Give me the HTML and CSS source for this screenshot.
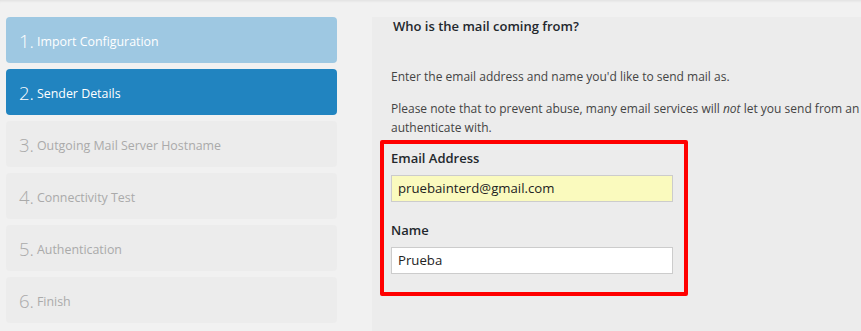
FILE: index.html
```html
<!DOCTYPE html>
<html>
<head>
<meta charset="utf-8">
<link rel="stylesheet" href="styles.css">
</head>
<body>
<div class="page">
  <nav class="steps">
    <div class="step done"><span class="num">1.</span><span class="lbl">Import Configuration</span></div>
    <div class="step current"><span class="num">2.</span><span class="lbl">Sender Details</span></div>
    <div class="step"><span class="num">3.</span><span class="lbl">Outgoing Mail Server Hostname</span></div>
    <div class="step"><span class="num">4.</span><span class="lbl">Connectivity Test</span></div>
    <div class="step"><span class="num">5.</span><span class="lbl">Authentication</span></div>
    <div class="step"><span class="num">6.</span><span class="lbl">Finish</span></div>
  </nav>
  <section class="panel">
    <h2 class="title">Who is the mail coming from?</h2>
    <p class="intro">Enter the email address and name you'd like to send mail as.</p>
    <p class="note">Please note that to prevent abuse, many email services will <em>not</em> let you send from an email address other than the one you<br>authenticate with.</p>
    <div class="highlight">
      <label class="field-label">Email Address</label>
      <div class="input autofill">pruebainterd@gmail.com</div>
      <label class="field-label name-label">Name</label>
      <div class="input">Prueba</div>
    </div>
  </section>
</div>
</body>
</html>
```
FILE: styles.css
```css
html, body {
  margin: 0;
  padding: 0;
  height: 100%;
  overflow: hidden;
}
body {
  background: #f1f1f1;
  font-family: "Open Sans", "Noto Sans", sans-serif;
  color: #444;
  box-shadow: inset 0 3px 3px -2px rgba(0,0,0,0.08);
}
.page {
  display: flex;
  padding-top: 17px;
  height: 100%;
  box-sizing: border-box;
}
.steps {
  display: flex;
  flex-direction: column;
  gap: 6px;
  margin-left: 6px;
  width: 331px;
  flex: 0 0 331px;
}
.step {
  height: 46px;
  border-radius: 4px;
  background: #ececec;
  color: #aaa;
  display: flex;
  align-items: center;
  padding: 2px 0 0 13px;
  box-sizing: border-box;
  white-space: nowrap;
}
.step .num {
  font-size: 18.5px;
  font-weight: 300;
  margin-right: 3px;
  line-height: 1;
}
.step .lbl {
  font-size: 12.4px;
  line-height: 1;
  padding-top: 3px;
}
.step.done {
  background: #9ec8e2;
  color: #fff;
}
.step.current {
  background: #2184c0;
  color: #fff;
}
.panel {
  flex: 1;
  margin-left: 35px;
  background: #ececec;
  padding: 0 0 0 19px;
  font-size: 12px;
  line-height: 19px;
  min-width: 0;
  overflow: hidden;
}
.title {
  margin: 0;
  font-size: 13px;
  font-weight: 600;
  color: #23282d;
  line-height: 18px;
  padding-left: 2px;
}
.intro {
  margin: 32px 0 13px;
}
.note {
  margin: 0;
  white-space: nowrap;
}
.highlight {
  margin: 3px 0 0 -11px;
  width: 308px;
  box-sizing: border-box;
  border: 4px solid #ff0000;
  border-radius: 2px;
  padding: 5px 11px 18px 7px;
  font-size: 13px;
}
.field-label {
  display: block;
  font-weight: 600;
  color: #23282d;
  line-height: 18px;
  margin-bottom: 8px;
}
.name-label {
  margin-top: 19px;
}
.input {
  height: 27px;
  box-sizing: border-box;
  border: 1px solid #ccc;
  background: #fff;
  color: #222;
  font-size: 13.2px;
  line-height: 25px;
  padding-left: 6px;
  width: 282px;
}
.input.autofill {
  background: #fafabe;
}
```
